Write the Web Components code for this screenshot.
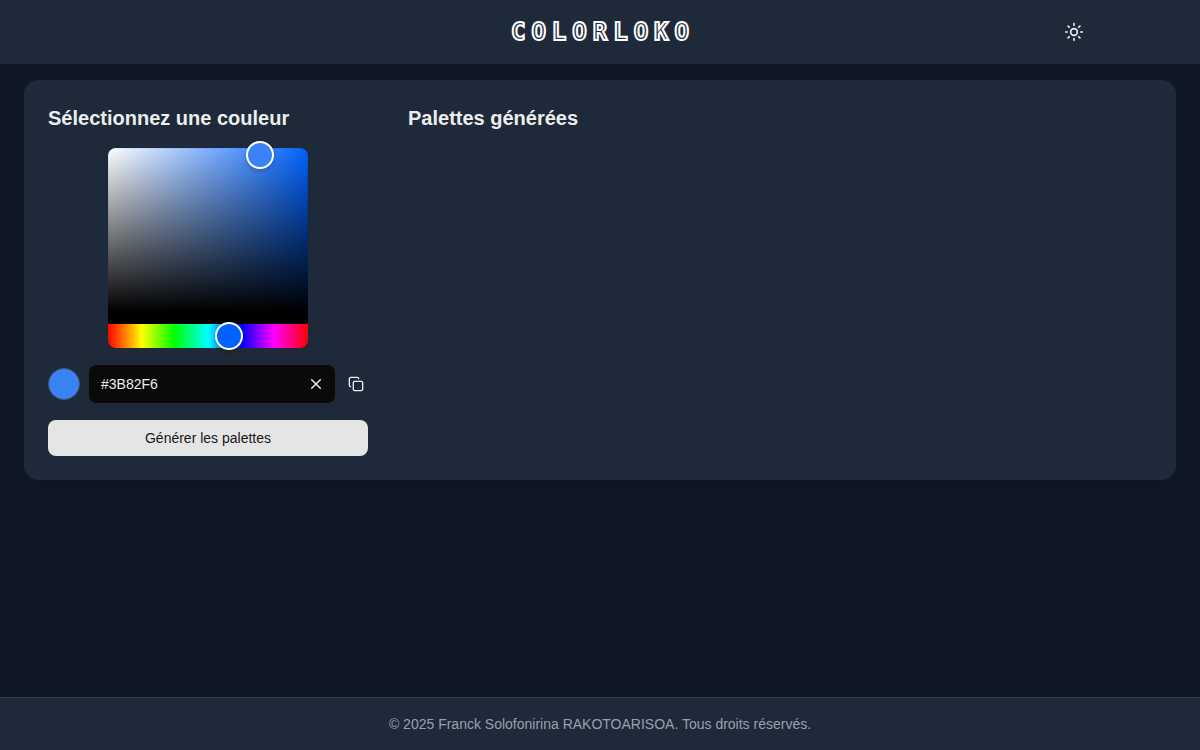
<!DOCTYPE html>
<html lang="fr">
<head>
<meta charset="utf-8">
<meta name="viewport" content="width=device-width, initial-scale=1">
<title>Colorloko</title>
<style>
  html { height: 100%; }
  body {
    margin: 0;
    min-height: 100%;
    background: #101828;
    color: #ededed;
    font: 14px/20px "Liberation Sans", Arial, sans-serif;
    display: flex;
    flex-direction: column;
  }
</style>
</head>
<body>
<app-header></app-header>
<app-main></app-main>
<app-footer>© 2025 Franck Solofonirina RAKOTOARISOA. Tous droits réservés.</app-footer>

<script>
const base = '*{box-sizing:border-box}button{font:inherit;color:inherit;background:none;border:0;padding:0;cursor:pointer}svg{display:block;fill:none;stroke:currentColor;stroke-linecap:round;stroke-linejoin:round}';

function define(name, html, init) {
  customElements.define(name, class extends HTMLElement {
    constructor() {
      super();
      const root = this.attachShadow({ mode: 'open' });
      const t = document.createElement('template');
      t.innerHTML = `<style>${base}</style>${html}`;
      root.append(t.content.cloneNode(true));
      if (init) init.call(this, root);
    }
  });
}

define('app-logo', `
<style>
  :host { display: block; }
  a {
    display: block;
    font: bold 24px/32px "DejaVu Sans Mono", monospace;
    letter-spacing: 6px;
    margin-right: -6px;
    color: #1e2939;
    -webkit-text-stroke: 2px #fff;
    text-decoration: none;
  }
</style>
<a href="#">COLORLOKO</a>`);

define('app-header', `
<style>
  :host { display: block; background: #1e2939; box-shadow: 0 1px 3px rgba(0,0,0,.1); }
  header {
    display: grid;
    grid-template-columns: 1fr auto 1fr;
    align-items: center;
    max-width: 1024px;
    height: 64px;
    margin: 0 auto;
    padding: 0 16px;
  }
  app-logo { grid-column: 2; }
  button { justify-self: end; padding: 12px; }
</style>
<header>
  <app-logo></app-logo>
  <button type="button" aria-label="Changer de thème">
    <svg width="20" height="20" viewBox="0 0 24 24" stroke-width="2"><circle cx="12" cy="12" r="4"/><path d="M12 2v2M12 20v2M4.93 4.93l1.41 1.41M17.66 17.66l1.41 1.41M2 12h2M20 12h2M6.34 17.66l-1.41 1.41M19.07 4.93l-1.41 1.41"/></svg>
  </button>
</header>`);

define('app-footer', `
<style>
  :host { display: block; background: #1e2939; border-top: 1px solid #364153; }
  footer { padding: 16px; text-align: center; color: #99a1af; }
</style>
<footer><slot></slot></footer>`);

define('color-area', `
<style>
  :host { display: flex; flex-direction: column; width: 200px; height: 200px; --hue: 217; --sat: 76%; --dark: 4%; --color: #3b82f6; }
  .area {
    position: relative;
    flex: 1;
    border-bottom: 12px solid #000;
    border-radius: 8px 8px 0 0;
    background: linear-gradient(to top, #000, transparent), linear-gradient(to right, #fff, transparent), hsl(var(--hue) 100% 50%);
    box-shadow: inset 0 0 0 1px rgba(0,0,0,.05);
    cursor: pointer;
  }
  .pointer {
    position: absolute;
    left: var(--sat);
    top: var(--dark);
    width: 28px;
    height: 28px;
    transform: translate(-50%, -50%);
    border: 2px solid #fff;
    border-radius: 50%;
    background: var(--color);
    box-shadow: 0 2px 4px rgba(0,0,0,.2);
  }
  .hue {
    position: relative;
    height: 24px;
    border-radius: 0 0 8px 8px;
    background: linear-gradient(to right, #f00 0%, #ff0 17%, #0f0 33%, #0ff 50%, #00f 67%, #f0f 83%, #f00 100%);
  }
  input {
    appearance: none;
    display: block;
    width: 228px;
    height: 24px;
    margin: 0 -14px;
    background: none;
    outline: none;
    cursor: pointer;
  }
  input::-webkit-slider-thumb {
    appearance: none;
    width: 28px;
    height: 28px;
    border: 2px solid #fff;
    border-radius: 50%;
    background: hsl(var(--hue) 100% 50%);
    box-shadow: 0 2px 4px rgba(0,0,0,.2);
  }
</style>
<div class="area" role="slider" tabindex="0" aria-label="Couleur" aria-valuetext="Saturation 76%, luminosité 96%"><div class="pointer"></div></div>
<div class="hue"><input type="range" min="0" max="360" value="217" aria-label="Teinte"></div>`,
function (root) {
  const state = { h: 217, s: .76, v: .96 };
  const area = root.querySelector('.area');
  const update = () => {
    const f = n => {
      const k = (n + state.h / 60) % 6;
      const c = state.v - state.v * state.s * Math.max(0, Math.min(k, 4 - k, 1));
      return Math.round(c * 255).toString(16).padStart(2, '0');
    };
    const hex = '#' + f(5) + f(3) + f(1);
    this.style.setProperty('--hue', state.h);
    this.style.setProperty('--sat', state.s * 100 + '%');
    this.style.setProperty('--dark', (1 - state.v) * 100 + '%');
    this.style.setProperty('--color', hex);
    this.dispatchEvent(new CustomEvent('pick', { detail: hex.toUpperCase() }));
  };
  const clamp = n => Math.max(0, Math.min(1, n));
  const move = e => {
    if (!e.buttons) return;
    const r = area.getBoundingClientRect();
    state.s = clamp((e.clientX - r.left) / r.width);
    state.v = 1 - clamp((e.clientY - r.top) / area.clientHeight);
    update();
  };
  area.addEventListener('pointerdown', e => { area.setPointerCapture(e.pointerId); move(e); });
  area.addEventListener('pointermove', move);
  root.querySelector('input').addEventListener('input', e => { state.h = +e.target.value; update(); });
});

define('color-field', `
<style>
  :host { display: flex; align-items: center; gap: 8px; --color: #3b82f6; }
  .swatch { flex: none; width: 32px; height: 32px; border: 1px solid #4a5565; border-radius: 50%; background: var(--color); }
  .box {
    flex: 1;
    min-width: 0;
    display: flex;
    align-items: center;
    height: 40px;
    padding: 0 12px;
    border: 1px solid #2a2a2a;
    border-radius: 8px;
    background: #0a0a0a;
  }
  input { flex: 1; min-width: 0; padding: 0; border: 0; outline: 0; background: none; color: #ededed; font: inherit; }
  .copy { padding: 4px; }
</style>
<div class="swatch"></div>
<div class="box">
  <input type="text" value="#3B82F6" aria-label="Code hexadécimal">
  <button class="clear" type="button" aria-label="Effacer"><svg width="14" height="14" viewBox="0 0 14 14" stroke-width="1.5"><path d="M2.7 2.7l8.6 8.6M11.3 2.7l-8.6 8.6"/></svg></button>
</div>
<button class="copy" type="button" aria-label="Copier"><svg width="16" height="16" viewBox="0 0 24 24" stroke-width="2"><rect x="8" y="8" width="14" height="14" rx="2"/><path d="M4 16c-1.1 0-2-.9-2-2V4c0-1.1.9-2 2-2h10c1.1 0 2 .9 2 2"/></svg></button>`,
function (root) {
  const input = root.querySelector('input');
  this.show = hex => { input.value = hex; this.style.setProperty('--color', hex); };
  input.addEventListener('input', () => this.style.setProperty('--color', input.value));
  root.querySelector('.clear').addEventListener('click', () => { input.value = ''; input.focus(); });
  root.querySelector('.copy').addEventListener('click', () => navigator.clipboard?.writeText(input.value));
});

define('color-selector', `
<style>
  :host { display: flex; flex-direction: column; gap: 16px; }
  color-area { align-self: center; }
  .generate { height: 36px; border-radius: 8px; background: #e5e5e5; color: #171717; }
</style>
<slot></slot>
<color-area></color-area>
<color-field></color-field>
<button class="generate" type="button">Générer les palettes</button>`,
function (root) {
  root.querySelector('color-area').addEventListener('pick', e => root.querySelector('color-field').show(e.detail));
});

define('app-main', `
<style>
  :host { display: block; flex: 1; padding: 16px 24px; }
  main {
    display: grid;
    grid-template-columns: 320px 1fr;
    gap: 40px;
    padding: 24px;
    border-radius: 14px;
    background: #1e2939;
    box-shadow: 0 10px 15px -3px rgba(0,0,0,.1), 0 4px 6px -4px rgba(0,0,0,.1);
  }
  h2 { margin: 0; font-size: 20px; line-height: 28px; }
  @media (max-width: 700px) { main { grid-template-columns: 1fr; } }
</style>
<main>
  <color-selector><h2>Sélectionnez une couleur</h2></color-selector>
  <section><h2>Palettes générées</h2></section>
</main>`);
</script>
</body>
</html>
